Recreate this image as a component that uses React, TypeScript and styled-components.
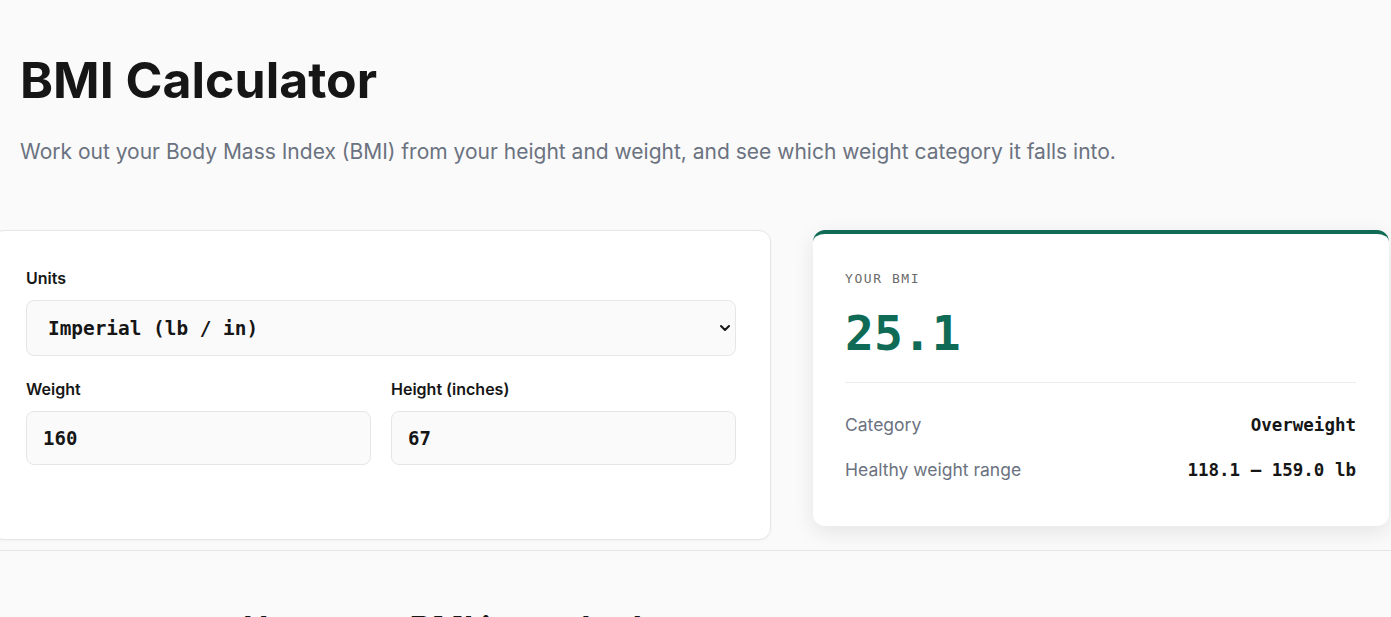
import styled, { createGlobalStyle } from "styled-components";
import { useState } from "react";

const GlobalStyle = createGlobalStyle`
    body {
        margin: 0;
        background: #fafafa;
        font-family: Inter, "Noto Sans", sans-serif;
        color: #161616;
        overflow: hidden;
    }
`;

const mono = `"DejaVu Sans Mono", "Liberation Mono", monospace`;

const StyledPage = styled.div`
    padding: 0 20px;
`;

const StyledHeader = styled.header`
    padding-top: 50px;
`;

const StyledTitle = styled.h1`
    margin: 0;
    font-size: 50px;
    font-weight: 700;
    letter-spacing: 0;
    line-height: 60px;
    color: #161616;
`;

const StyledIntro = styled.p`
    margin: 27px 0 0;
    font-size: 21px;
    line-height: 30px;
    color: #6b7280;
`;

const StyledGrid = styled.div`
    display: grid;
    grid-template-columns: 779px 576px;
    gap: 42px;
    align-items: start;
    margin: 63px -18px 0 -28px;
`;

const StyledFormCard = styled.section`
    background: #fff;
    border: 1px solid #e6e6e6;
    border-radius: 12px;
    box-shadow: 0 1px 3px rgba(0, 0, 0, 0.04);
    padding: 36px 34px 74px 33px;
`;

const StyledField = styled.div`
    display: flex;
    flex-direction: column;
    gap: 11px;
`;

const StyledRow = styled.div`
    display: grid;
    grid-template-columns: 1fr 1fr;
    gap: 20px;
    margin-top: 22px;
`;

const StyledLabel = styled.label`
    font-size: 16px;
    font-weight: 600;
    line-height: 22px;
    color: #161616;
`;

const StyledSelectWrap = styled.div`
    position: relative;
`;

const StyledSelect = styled.select`
    width: 100%;
    height: 56px;
    appearance: none;
    background: #fafafa;
    border: 1px solid #e6e6e6;
    border-radius: 8px;
    padding: 0 21px;
    font-family: ${mono};
    font-size: 19.4px;
    font-weight: 600;
    color: #161616;
`;

const StyledChevron = styled.svg`
    position: absolute;
    right: 5px;
    top: 22px;
    pointer-events: none;
`;

const StyledInput = styled.input`
    width: 100%;
    box-sizing: border-box;
    height: 54px;
    background: #fafafa;
    border: 1px solid #e6e6e6;
    border-radius: 8px;
    padding: 0 16px;
    font-family: ${mono};
    font-size: 19px;
    font-weight: 600;
    color: #161616;
`;

const StyledResultCard = styled.section`
    background: #fff;
    border-radius: 12px;
    border-top: 4px solid #0f6b56;
    box-shadow: 0 6px 22px rgba(0, 0, 0, 0.09);
    padding: 36px 33px 44px 32px;
`;

const StyledEyebrow = styled.div`
    font-family: ${mono};
    font-size: 13px;
    letter-spacing: 0.12em;
    color: #6b6b6b;
    line-height: 18px;
`;

const StyledValue = styled.div`
    font-family: ${mono};
    font-size: 48px;
    font-weight: 700;
    line-height: 56px;
    color: #0f6b56;
    margin-top: 17px;
`;

const StyledDivider = styled.hr`
    border: 0;
    border-top: 1px solid #ececec;
    margin: 21px 0 30px;
`;

const StyledStats = styled.div`
    display: flex;
    flex-direction: column;
    gap: 21px;
`;

const StyledStat = styled.div`
    display: flex;
    justify-content: space-between;
    align-items: center;
    line-height: 24px;
`;

const StyledStatLabel = styled.span`
    font-size: 17.5px;
    color: #6b7280;
`;

const StyledStatValue = styled.span`
    font-family: ${mono};
    font-size: 17.5px;
    font-weight: 700;
    color: #161616;
`;

const StyledSection = styled.section`
    margin: 10px -20px 0;
    border-top: 1px solid #e6e6e6;
    padding: 58px 0 0 243px;
`;

const StyledSectionTitle = styled.h2`
    margin: 0;
    font-size: 34px;
    font-weight: 700;
    line-height: 40px;
    color: #161616;
`;

function bmiInfo(weight: number, height: number) {
    const bmi = (703 * weight) / (height * height);
    let category = "Underweight";
    if (bmi >= 30) category = "Obese";
    else if (bmi >= 25) category = "Overweight";
    else if (bmi >= 18.5) category = "Healthy";
    const low = (18.5 * height * height) / 703;
    const high = (24.9 * height * height) / 703;
    return { bmi, category, low, high };
}

export default function App() {
    const [units, setUnits] = useState("imperial");
    const [weight, setWeight] = useState("160");
    const [height, setHeight] = useState("67");

    const info = bmiInfo(Number(weight), Number(height));

    return (
        <StyledPage>
            <GlobalStyle />
            <StyledHeader>
                <StyledTitle>BMI Calculator</StyledTitle>
                <StyledIntro>
                    Work out your Body Mass Index (BMI) from your height and weight, and see which weight category it falls into.
                </StyledIntro>
            </StyledHeader>

            <StyledGrid>
                <StyledFormCard>
                    <StyledField>
                        <StyledLabel htmlFor="units">Units</StyledLabel>
                        <StyledSelectWrap>
                            <StyledSelect id="units" value={units} onChange={(e) => setUnits(e.target.value)}>
                                <option value="imperial">Imperial (lb / in)</option>
                                <option value="metric">Metric (kg / cm)</option>
                            </StyledSelect>
                            <StyledChevron width="12" height="12" viewBox="0 0 12 12">
                                <path d="M2 4 L6 8 L10 4" fill="none" stroke="#161616" strokeWidth="2" strokeLinecap="round" strokeLinejoin="round" />
                            </StyledChevron>
                        </StyledSelectWrap>
                    </StyledField>
                    <StyledRow>
                        <StyledField>
                            <StyledLabel htmlFor="weight">Weight</StyledLabel>
                            <StyledInput id="weight" value={weight} onChange={(e) => setWeight(e.target.value)} />
                        </StyledField>
                        <StyledField>
                            <StyledLabel htmlFor="height">Height (inches)</StyledLabel>
                            <StyledInput id="height" value={height} onChange={(e) => setHeight(e.target.value)} />
                        </StyledField>
                    </StyledRow>
                </StyledFormCard>

                <StyledResultCard>
                    <StyledEyebrow>YOUR BMI</StyledEyebrow>
                    <StyledValue>{info.bmi.toFixed(1)}</StyledValue>
                    <StyledDivider />
                    <StyledStats>
                        <StyledStat>
                            <StyledStatLabel>Category</StyledStatLabel>
                            <StyledStatValue>{info.category}</StyledStatValue>
                        </StyledStat>
                        <StyledStat>
                            <StyledStatLabel>Healthy weight range</StyledStatLabel>
                            <StyledStatValue>
                                {info.low.toFixed(1)} – {info.high.toFixed(1)} lb
                            </StyledStatValue>
                        </StyledStat>
                    </StyledStats>
                </StyledResultCard>
            </StyledGrid>

            <StyledSection>
                <StyledSectionTitle>How your BMI is worked out</StyledSectionTitle>
            </StyledSection>
        </StyledPage>
    );
}
